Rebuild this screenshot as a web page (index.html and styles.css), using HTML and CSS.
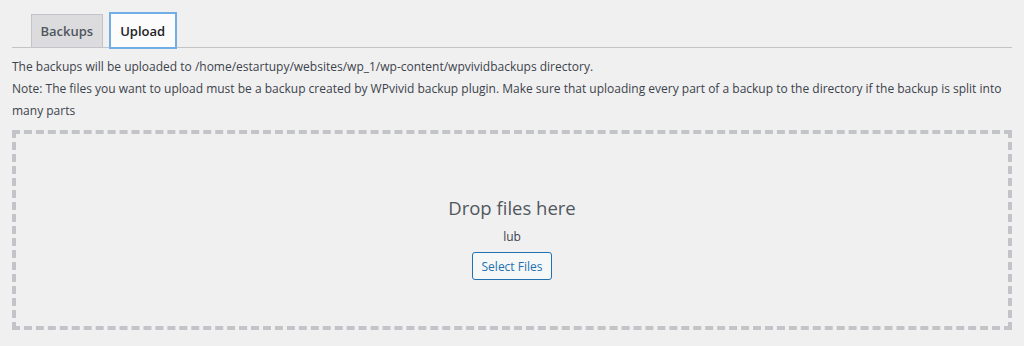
FILE: index.html
```html
<!DOCTYPE html>
<html lang="en">
<head>
<meta charset="utf-8">
<title>Upload</title>
<link rel="stylesheet" href="styles.css">
</head>
<body>
<div class="wrap">
  <nav class="tabs">
    <span class="tab">Backups</span>
    <span class="tab tab-active">Upload</span>
  </nav>
  <p class="note">The backups will be uploaded to /home/estartupy/websites/wp_1/wp-content/wpvividbackups directory.</p>
  <p class="note">Note: The files you want to upload must be a backup created by WPvivid backup plugin. Make sure that uploading every part of a backup to the directory if the backup is split into many parts</p>
  <div class="dropzone">
    <div class="drop-title">Drop files here</div>
    <div class="drop-or">lub</div>
    <button class="btn" type="button">Select Files</button>
  </div>
</div>
</body>
</html>
```
FILE: styles.css
```css
html, body {
  margin: 0;
  padding: 0;
  background: #f0f0f1;
}
body {
  font-family: "Open Sans", "Noto Sans", sans-serif;
  color: #3c434a;
  font-size: 12px;
}
.wrap {
  width: 1000px;
  padding: 13px 0 0 12px;
}
.tabs {
  display: flex;
  align-items: flex-end;
  gap: 7px;
  padding-left: 19px;
  border-bottom: 1px solid #c3c4c7;
  height: 34px;
}
.tab {
  display: flex;
  align-items: center;
  box-sizing: border-box;
  height: 33px;
  padding: 0 8.5px;
  border: 1px solid #c3c4c7;
  border-bottom: none;
  background: #dcdcde;
  color: #50575e;
  font-size: 13px;
  font-weight: 600;
}
.tab-active {
  height: 35px;
  margin-bottom: -1px;
  padding: 0 9.5px;
  background: #fcfcfc;
  color: #1d2327;
  border: 1px solid #72aee6;
  box-shadow: 0 0 0 1px #72aee6;
}
.note {
  margin: 0;
  line-height: 22px;
}
.tabs + .note {
  margin-top: 8px;
}
.dropzone {
  margin-top: 8px;
  height: 200px;
  box-sizing: border-box;
  border: 4px dashed #c3c4c7;
  display: flex;
  flex-direction: column;
  align-items: center;
  padding-top: 60px;
}
.drop-title {
  font-size: 18.5px;
  line-height: 28px;
  color: #50575e;
}
.drop-or {
  margin-top: 5px;
  line-height: 20px;
  font-size: 12px;
}
.btn {
  margin-top: 5px;
  height: 28px;
  width: 80px;
  padding: 0;
  font-family: inherit;
  font-size: 12px;
  color: #2271b1;
  background: #f6f7f7;
  border: 1px solid #2271b1;
  border-radius: 3px;
}
```
